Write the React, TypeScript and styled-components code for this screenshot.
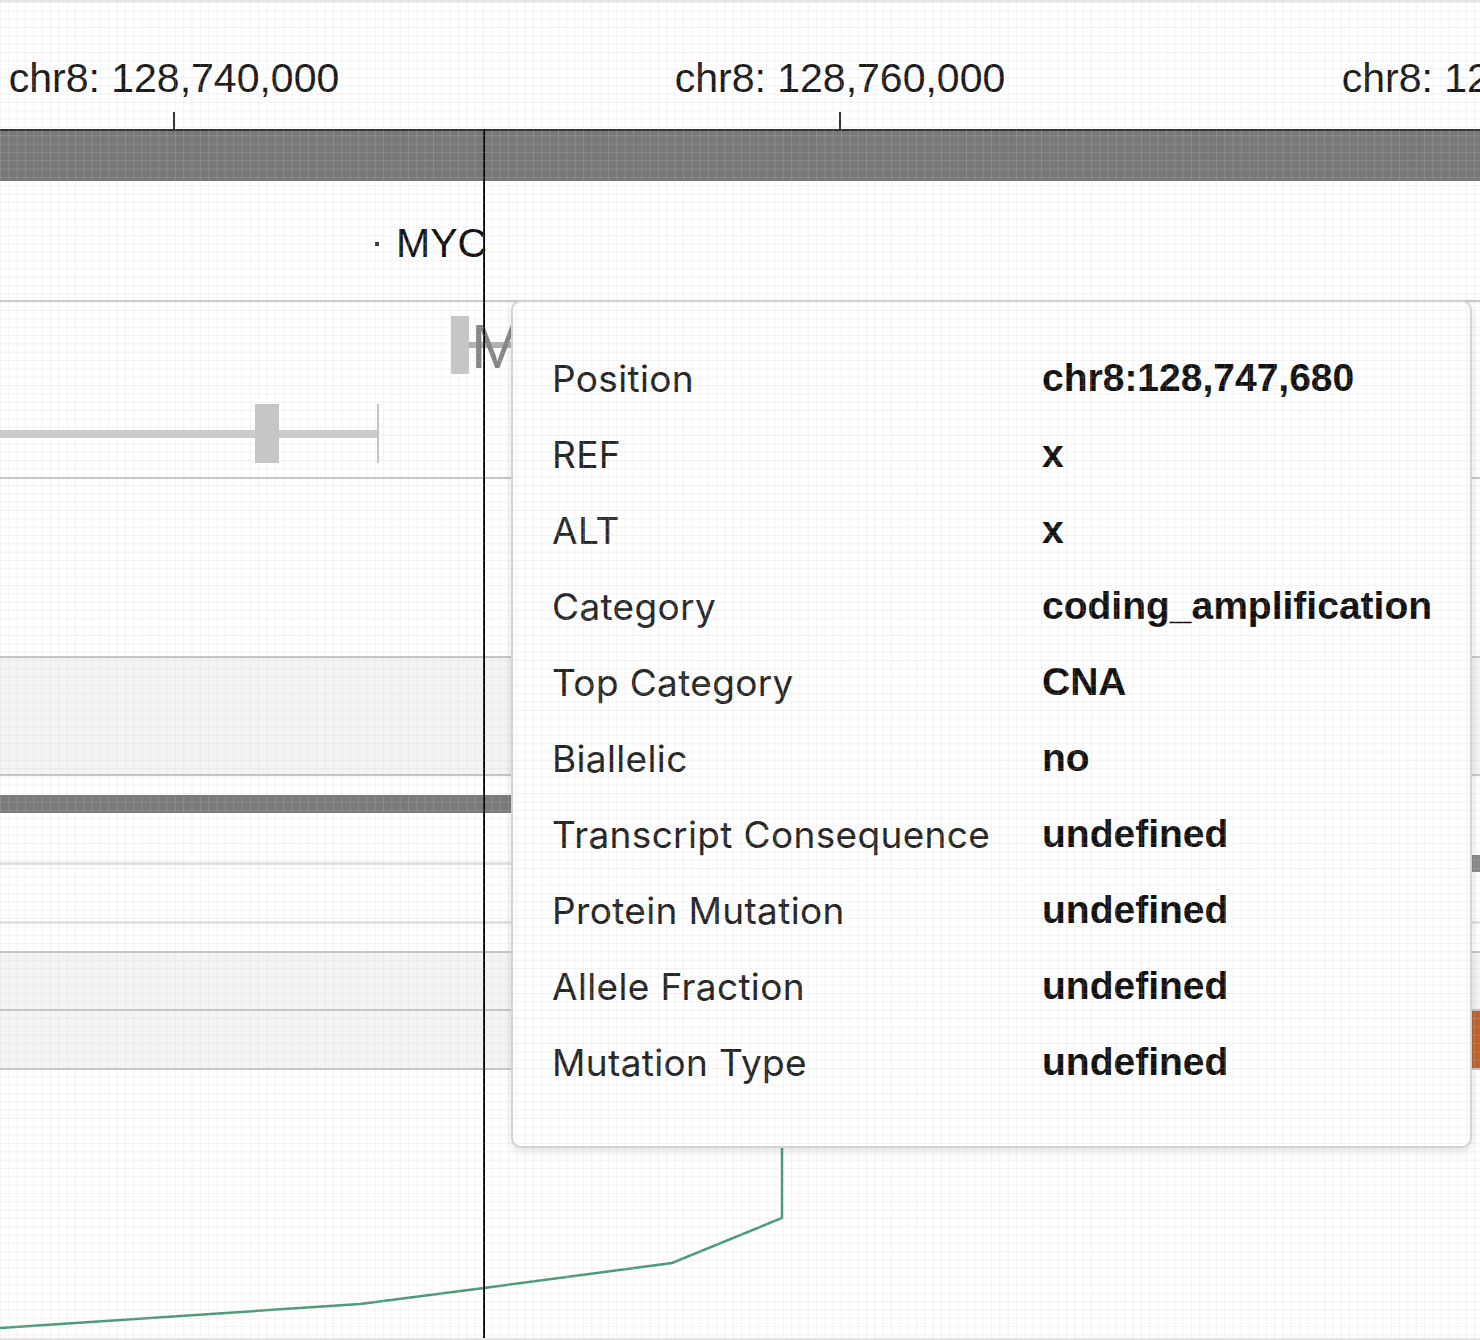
import React from "react";
import styled, { createGlobalStyle } from "styled-components";

const GlobalStyle = createGlobalStyle`
  html, body { margin: 0; padding: 0; background: #ffffff; }
  body { font-family: "Liberation Sans", Arial, sans-serif; }
`;

const Frame = styled.div`
  position: relative;
  width: 1480px;
  height: 1340px;
  box-sizing: border-box;
  border-top: 2px solid #e4e4e4;
  border-bottom: 2px solid #e4e4e4;
  overflow: hidden;
  display: flex;
  flex-direction: column;
  background: #ffffff;

  &::after {
    content: "";
    position: absolute;
    inset: 0;
    pointer-events: none;
    z-index: 20;
    background-image:
      linear-gradient(to right, rgba(200, 200, 200, 0.22) 1px, transparent 1px),
      linear-gradient(to bottom, rgba(200, 200, 200, 0.22) 1px, transparent 1px);
    background-size: 8.33px 8.33px;
  }
`;

const AxisTrack = styled.div`
  position: relative;
  height: 127px;
  flex: none;
`;

const TickLabel = styled.span`
  position: absolute;
  top: 56px;
  transform: translateX(-50%);
  font-family: "Liberation Sans", Arial, sans-serif;
  font-size: 41px;
  line-height: 41px;
  color: #1a1a1a;
  white-space: nowrap;
`;

const Tick = styled.span`
  position: absolute;
  top: 110px;
  width: 2px;
  height: 17px;
  background: #333333;
`;

const ChromosomeBar = styled.div`
  height: 52px;
  flex: none;
  box-sizing: border-box;
  border-top: 2px solid #333333;
  background: #787878;
`;

const GeneLabelTrack = styled.div`
  position: relative;
  height: 119px;
  flex: none;
`;

const GeneName = styled.span`
  position: absolute;
  top: 42px;
  font-family: "Liberation Sans", Arial, sans-serif;
  font-size: 41px;
  line-height: 41px;
  color: #111111;
`;

const GeneDot = styled.span`
  position: absolute;
  width: 4px;
  height: 4px;
  background: #333333;
`;

const TranscriptTrack = styled.div`
  height: 179px;
  flex: none;
  box-sizing: border-box;
  border-top: 2px solid #cacaca;
  border-bottom: 2px solid #c8c8c8;

  svg { display: block; }
`;

const EmptyTrack = styled.div<{ $h: number }>`
  height: ${(p) => p.$h}px;
  flex: none;
`;

const ShadedBand = styled.div<{ $h: number; $top?: boolean }>`
  position: relative;
  height: ${(p) => p.$h}px;
  flex: none;
  box-sizing: border-box;
  background: #f4f4f4;
  border-top: ${(p) => (p.$top ? "2px solid #c6c6c6" : "none")};
  border-bottom: 2px solid #c6c6c6;
`;

const DarkBar = styled.div`
  height: 18px;
  width: 1300px;
  flex: none;
  background: #7a7a7a;
`;

const PointTrack = styled.div`
  position: relative;
  height: 138px;
  flex: none;
  display: flex;
  flex-direction: column;
  padding-top: 49px;
  box-sizing: border-box;
  gap: 56px;
`;

const RuleLine = styled.div`
  height: 3px;
  background: #e2e2e2;
`;

const EdgeFeature = styled.span<{ $color: string }>`
  position: absolute;
  left: 1472px;
  width: 8px;
  background: ${(p) => p.$color};
`;

const ChartTrack = styled.div`
  flex: 1;
  svg { display: block; }
`;

const Crosshair = styled.div`
  position: absolute;
  left: 483px;
  top: 127px;
  bottom: 0;
  width: 2px;
  background: #000000;
  z-index: 5;
`;

const Tooltip = styled.div`
  position: absolute;
  left: 511px;
  top: 298px;
  width: 961px;
  height: 848px;
  box-sizing: border-box;
  background: #ffffff;
  border: 2px solid #d4d4d4;
  border-radius: 10px;
  box-shadow: 0 3px 8px rgba(0, 0, 0, 0.12);
  padding: 38px 0 0 39px;
  z-index: 10;
`;

const InfoGrid = styled.dl`
  margin: 0;
  display: grid;
  grid-template-columns: 490px 1fr;
  grid-auto-rows: 76px;
  align-items: center;
`;

const InfoLabel = styled.dt`
  margin: 0;
  font-family: Inter, "Noto Sans", sans-serif;
  font-size: 37px;
  letter-spacing: 0.35px;
  color: #252525;
  white-space: nowrap;
`;

const InfoValue = styled.dd`
  margin: 0;
  font-family: "Liberation Sans", Arial, sans-serif;
  font-weight: 700;
  font-size: 39px;
  color: #111111;
  white-space: nowrap;
`;

const rows: [string, string][] = [
  ["Position", "chr8:128,747,680"],
  ["REF", "x"],
  ["ALT", "x"],
  ["Category", "coding_amplification"],
  ["Top Category", "CNA"],
  ["Biallelic", "no"],
  ["Transcript Consequence", "undefined"],
  ["Protein Mutation", "undefined"],
  ["Allele Fraction", "undefined"],
  ["Mutation Type", "undefined"],
];

const ticks = [
  { x: 174, label: "chr8: 128,740,000" },
  { x: 840, label: "chr8: 128,760,000" },
  { x: 1507, label: "chr8: 128,780,000" },
];

export default function App() {
  return (
    <>
      <GlobalStyle />
      <Frame>
        <AxisTrack>
          {ticks.map((t) => (
            <React.Fragment key={t.label}>
              <TickLabel style={{ left: t.x }}>{t.label}</TickLabel>
              <Tick style={{ left: t.x - 1 }} />
            </React.Fragment>
          ))}
        </AxisTrack>
        <ChromosomeBar />
        <GeneLabelTrack>
          <GeneDot style={{ left: 375, top: 61 }} />
          <GeneName style={{ left: 396 }}>MYC</GeneName>
        </GeneLabelTrack>
        <TranscriptTrack>
          <svg width="1480" height="175" viewBox="0 0 1480 175">
            <rect x="451" y="40" width="80" height="6" fill="#b0b0b0" />
            <rect x="451" y="14" width="18" height="58" fill="#c6c6c6" />
            <text
              x="471"
              y="66"
              fontFamily="Liberation Sans, Arial, sans-serif"
              fontSize="63"
              fill="#858585"
            >
              M
            </text>
            <rect x="0" y="128" width="378" height="8" fill="#cbcbcb" />
            <rect x="255" y="102" width="24" height="59" fill="#c6c6c6" />
            <rect x="377" y="102" width="2" height="59" fill="#c4c4c4" />
          </svg>
        </TranscriptTrack>
        <EmptyTrack $h={177} />
        <ShadedBand $h={120} $top />
        <EmptyTrack $h={19} />
        <DarkBar />
        <PointTrack>
          <RuleLine />
          <RuleLine />
          <EdgeFeature $color="#8a8a8a" style={{ top: 42, height: 17 }} />
        </PointTrack>
        <ShadedBand $h={60} $top />
        <ShadedBand $h={59}>
          <EdgeFeature $color="#c4622d" style={{ top: 0, height: 57 }} />
        </ShadedBand>
        <ChartTrack>
          <svg width="1480" height="268" viewBox="0 0 1480 268">
            <polyline
              points="0,258 360,234 484,218 672,193 782,148 782,40"
              fill="none"
              stroke="#4a9a78"
              strokeWidth="2.5"
            />
          </svg>
        </ChartTrack>
        <Crosshair />
        <Tooltip>
          <InfoGrid>
            {rows.map(([k, v]) => (
              <React.Fragment key={k}>
                <InfoLabel>{k}</InfoLabel>
                <InfoValue>{v}</InfoValue>
              </React.Fragment>
            ))}
          </InfoGrid>
        </Tooltip>
      </Frame>
    </>
  );
}
